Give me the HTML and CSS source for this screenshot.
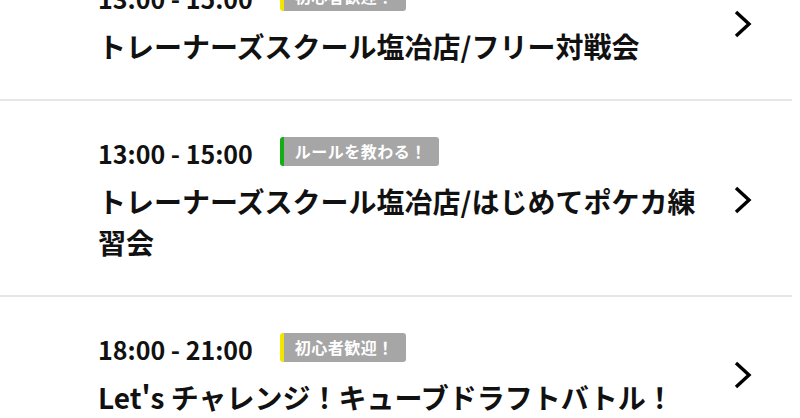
FILE: index.html
```html
<!DOCTYPE html>
<html lang="ja">
<head>
<meta charset="utf-8">
<link rel="stylesheet" href="styles.css">
</head>
<body>
<ul class="list">
  <li class="item">
    <div class="content">
      <div class="meta">
        <span class="time">13:00 - 15:00</span>
        <span class="tag tag-yellow">初心者歓迎！</span>
      </div>
      <div class="title">トレーナーズスクール塩冶店/フリー対戦会</div>
    </div>
    <svg class="chev" viewBox="0 0 18 28" width="18" height="28"><polyline points="2,2 15,14 2,26" fill="none" stroke="#000" stroke-width="3.4"/></svg>
  </li>
  <li class="item">
    <div class="content">
      <div class="meta">
        <span class="time">13:00 - 15:00</span>
        <span class="tag tag-green">ルールを教わる！</span>
      </div>
      <div class="title">トレーナーズスクール塩冶店/はじめてポケカ練習会</div>
    </div>
    <svg class="chev" viewBox="0 0 18 28" width="18" height="28"><polyline points="2,2 15,14 2,26" fill="none" stroke="#000" stroke-width="3.4"/></svg>
  </li>
  <li class="item">
    <div class="content">
      <div class="meta">
        <span class="time">18:00 - 21:00</span>
        <span class="tag tag-yellow">初心者歓迎！</span>
      </div>
      <div class="title">Let's チャレンジ！キューブドラフトバトル！</div>
    </div>
    <svg class="chev" viewBox="0 0 18 28" width="18" height="28"><polyline points="2,2 15,14 2,26" fill="none" stroke="#000" stroke-width="3.4"/></svg>
  </li>
</ul>
</body>
</html>
```
FILE: styles.css
```css
html, body {
  margin: 0;
  padding: 0;
  background: #fff;
  overflow: hidden;
}
body {
  font-family: "Noto Sans CJK JP", "Noto Sans", sans-serif;
  color: #111;
}
.list {
  list-style: none;
  margin: -54px 0 0 0;
  padding: 0;
  width: 792px;
}
.item {
  display: flex;
  align-items: center;
  padding: 35px 0 32px 98px;
  border-bottom: 2px solid #e6e6e6;
}
.content {
  flex: none;
  width: 612px;
}
.meta {
  display: flex;
  align-items: center;
  gap: 27px;
  height: 34px;
}
.time {
  font-size: 25px;
  font-weight: 700;
  line-height: 34px;
}
.tag {
  display: inline-block;
  background: #a6a6a6;
  color: #fff;
  font-size: 16px;
  font-weight: 700;
  line-height: 29px;
  height: 29px;
  padding: 0 12px 0 11px;
  border-left: 4px solid;
  border-radius: 3px;
  letter-spacing: 0.5px;
  position: relative;
  top: -2px;
}
.tag-yellow { border-left-color: #f2e600; }
.tag-green { border-left-color: #14ad14; }
.title {
  margin-top: 11px;
  font-size: 28px;
  font-weight: 700;
  line-height: 41px;
}
.chev {
  margin-left: 24px;
  flex: none;
}
```
